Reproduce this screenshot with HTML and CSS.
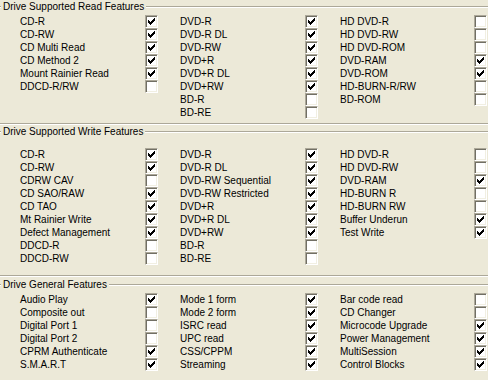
FILE: index.html
```html
<!DOCTYPE html>
<html lang="en">

<head>
    <meta charset="UTF-8">
    <meta name="viewport" content="width=device-width, initial-scale=1.0">
    <title>Drive Features</title>

    <link rel="stylesheet" href="styles.css">
</head>

<body>
    <!-- Lesefunksjoner -->
    <div class="group group-read">
        <div class="title">Drive Supported Read Features</div>
        <div class="cols">
            <div class="col">
                <div class="row"><span class="lbl">CD-R</span><span class="cb"><svg viewBox="0 0 11 11"><use href="#chk"/></svg></span></div>
                <div class="row"><span class="lbl">CD-RW</span><span class="cb"><svg viewBox="0 0 11 11"><use href="#chk"/></svg></span></div>
                <div class="row"><span class="lbl">CD Multi Read</span><span class="cb"><svg viewBox="0 0 11 11"><use href="#chk"/></svg></span></div>
                <div class="row"><span class="lbl">CD Method 2</span><span class="cb"><svg viewBox="0 0 11 11"><use href="#chk"/></svg></span></div>
                <div class="row"><span class="lbl">Mount Rainier Read</span><span class="cb"><svg viewBox="0 0 11 11"><use href="#chk"/></svg></span></div>
                <div class="row"><span class="lbl">DDCD-R/RW</span><span class="cb"></span></div>
            </div>
            <div class="col">
                <div class="row"><span class="lbl">DVD-R</span><span class="cb"><svg viewBox="0 0 11 11"><use href="#chk"/></svg></span></div>
                <div class="row"><span class="lbl">DVD-R DL</span><span class="cb"><svg viewBox="0 0 11 11"><use href="#chk"/></svg></span></div>
                <div class="row"><span class="lbl">DVD-RW</span><span class="cb"><svg viewBox="0 0 11 11"><use href="#chk"/></svg></span></div>
                <div class="row"><span class="lbl">DVD+R</span><span class="cb"><svg viewBox="0 0 11 11"><use href="#chk"/></svg></span></div>
                <div class="row"><span class="lbl">DVD+R DL</span><span class="cb"><svg viewBox="0 0 11 11"><use href="#chk"/></svg></span></div>
                <div class="row"><span class="lbl">DVD+RW</span><span class="cb"><svg viewBox="0 0 11 11"><use href="#chk"/></svg></span></div>
                <div class="row"><span class="lbl">BD-R</span><span class="cb"></span></div>
                <div class="row"><span class="lbl">BD-RE</span><span class="cb"></span></div>
            </div>
            <div class="col col-last">
                <div class="row"><span class="lbl">HD DVD-R</span><span class="cb"></span></div>
                <div class="row"><span class="lbl">HD DVD-RW</span><span class="cb"></span></div>
                <div class="row"><span class="lbl">HD DVD-ROM</span><span class="cb"></span></div>
                <div class="row"><span class="lbl">DVD-RAM</span><span class="cb"><svg viewBox="0 0 11 11"><use href="#chk"/></svg></span></div>
                <div class="row"><span class="lbl">DVD-ROM</span><span class="cb"><svg viewBox="0 0 11 11"><use href="#chk"/></svg></span></div>
                <div class="row"><span class="lbl">HD-BURN-R/RW</span><span class="cb"></span></div>
                <div class="row"><span class="lbl">BD-ROM</span><span class="cb"></span></div>
            </div>
        </div>
    </div>

    <!-- Skrivefunksjoner -->
    <div class="group group-write">
        <div class="title">Drive Supported Write Features</div>
        <div class="cols">
            <div class="col">
                <div class="row"><span class="lbl">CD-R</span><span class="cb"><svg viewBox="0 0 11 11"><use href="#chk"/></svg></span></div>
                <div class="row"><span class="lbl">CD-RW</span><span class="cb"><svg viewBox="0 0 11 11"><use href="#chk"/></svg></span></div>
                <div class="row"><span class="lbl">CDRW CAV</span><span class="cb"></span></div>
                <div class="row"><span class="lbl">CD SAO/RAW</span><span class="cb"><svg viewBox="0 0 11 11"><use href="#chk"/></svg></span></div>
                <div class="row"><span class="lbl">CD TAO</span><span class="cb"><svg viewBox="0 0 11 11"><use href="#chk"/></svg></span></div>
                <div class="row"><span class="lbl">Mt Rainier Write</span><span class="cb"><svg viewBox="0 0 11 11"><use href="#chk"/></svg></span></div>
                <div class="row"><span class="lbl">Defect Management</span><span class="cb"><svg viewBox="0 0 11 11"><use href="#chk"/></svg></span></div>
                <div class="row"><span class="lbl">DDCD-R</span><span class="cb"></span></div>
                <div class="row"><span class="lbl">DDCD-RW</span><span class="cb"></span></div>
            </div>
            <div class="col">
                <div class="row"><span class="lbl">DVD-R</span><span class="cb"><svg viewBox="0 0 11 11"><use href="#chk"/></svg></span></div>
                <div class="row"><span class="lbl">DVD-R DL</span><span class="cb"><svg viewBox="0 0 11 11"><use href="#chk"/></svg></span></div>
                <div class="row"><span class="lbl">DVD-RW Sequential</span><span class="cb"><svg viewBox="0 0 11 11"><use href="#chk"/></svg></span></div>
                <div class="row"><span class="lbl">DVD-RW Restricted</span><span class="cb"><svg viewBox="0 0 11 11"><use href="#chk"/></svg></span></div>
                <div class="row"><span class="lbl">DVD+R</span><span class="cb"><svg viewBox="0 0 11 11"><use href="#chk"/></svg></span></div>
                <div class="row"><span class="lbl">DVD+R DL</span><span class="cb"><svg viewBox="0 0 11 11"><use href="#chk"/></svg></span></div>
                <div class="row"><span class="lbl">DVD+RW</span><span class="cb"><svg viewBox="0 0 11 11"><use href="#chk"/></svg></span></div>
                <div class="row"><span class="lbl">BD-R</span><span class="cb"></span></div>
                <div class="row"><span class="lbl">BD-RE</span><span class="cb"></span></div>
            </div>
            <div class="col col-last">
                <div class="row"><span class="lbl">HD DVD-R</span><span class="cb"></span></div>
                <div class="row"><span class="lbl">HD DVD-RW</span><span class="cb"></span></div>
                <div class="row"><span class="lbl">DVD-RAM</span><span class="cb"><svg viewBox="0 0 11 11"><use href="#chk"/></svg></span></div>
                <div class="row"><span class="lbl">HD-BURN R</span><span class="cb"></span></div>
                <div class="row"><span class="lbl">HD-BURN RW</span><span class="cb"></span></div>
                <div class="row"><span class="lbl">Buffer Underun</span><span class="cb"><svg viewBox="0 0 11 11"><use href="#chk"/></svg></span></div>
                <div class="row"><span class="lbl">Test Write</span><span class="cb"><svg viewBox="0 0 11 11"><use href="#chk"/></svg></span></div>
            </div>
        </div>
    </div>

    <!-- Generelle funksjoner -->
    <div class="group group-general">
        <div class="title">Drive General Features</div>
        <div class="cols">
            <div class="col">
                <div class="row"><span class="lbl">Audio Play</span><span class="cb"><svg viewBox="0 0 11 11"><use href="#chk"/></svg></span></div>
                <div class="row"><span class="lbl">Composite out</span><span class="cb"></span></div>
                <div class="row"><span class="lbl">Digital Port 1</span><span class="cb"></span></div>
                <div class="row"><span class="lbl">Digital Port 2</span><span class="cb"></span></div>
                <div class="row"><span class="lbl">CPRM Authenticate</span><span class="cb"><svg viewBox="0 0 11 11"><use href="#chk"/></svg></span></div>
                <div class="row"><span class="lbl">S.M.A.R.T</span><span class="cb"><svg viewBox="0 0 11 11"><use href="#chk"/></svg></span></div>
            </div>
            <div class="col">
                <div class="row"><span class="lbl">Mode 1 form</span><span class="cb"><svg viewBox="0 0 11 11"><use href="#chk"/></svg></span></div>
                <div class="row"><span class="lbl">Mode 2 form</span><span class="cb"><svg viewBox="0 0 11 11"><use href="#chk"/></svg></span></div>
                <div class="row"><span class="lbl">ISRC read</span><span class="cb"><svg viewBox="0 0 11 11"><use href="#chk"/></svg></span></div>
                <div class="row"><span class="lbl">UPC read</span><span class="cb"><svg viewBox="0 0 11 11"><use href="#chk"/></svg></span></div>
                <div class="row"><span class="lbl">CSS/CPPM</span><span class="cb"><svg viewBox="0 0 11 11"><use href="#chk"/></svg></span></div>
                <div class="row"><span class="lbl">Streaming</span><span class="cb"><svg viewBox="0 0 11 11"><use href="#chk"/></svg></span></div>
            </div>
            <div class="col col-last">
                <div class="row"><span class="lbl">Bar code read</span><span class="cb"></span></div>
                <div class="row"><span class="lbl">CD Changer</span><span class="cb"></span></div>
                <div class="row"><span class="lbl">Microcode Upgrade</span><span class="cb"><svg viewBox="0 0 11 11"><use href="#chk"/></svg></span></div>
                <div class="row"><span class="lbl">Power Management</span><span class="cb"><svg viewBox="0 0 11 11"><use href="#chk"/></svg></span></div>
                <div class="row"><span class="lbl">MultiSession</span><span class="cb"><svg viewBox="0 0 11 11"><use href="#chk"/></svg></span></div>
                <div class="row"><span class="lbl">Control Blocks</span><span class="cb"><svg viewBox="0 0 11 11"><use href="#chk"/></svg></span></div>
            </div>
        </div>
    </div>

    <!-- Hakemerket, brukes av alle avkrysningsboksene -->
    <svg class="defs" width="0" height="0">
        <symbol id="chk" viewBox="0 0 11 11">
            <path d="M2 4H3V5H4V6H5V5H6V4H7V3H8V2H9V5H8V6H7V7H6V8H5V9H4V8H3V7H2Z" fill="#000" />
        </symbol>
    </svg>
</body>

</html>
```

FILE: styles.css
```css
body {
    margin: 0;
    background-color: #ece9d8;
    font-family: "Liberation Sans", Arial, sans-serif;
    font-size: 10px;
    line-height: 13px;
    color: #000;
    overflow: hidden;
}

.group {
    border-top: 1px solid #aca899;
    border-bottom: 1px solid #aca899;
    box-shadow: inset 0 1px #fff, 0 1px #fff;
}

.group-read {
    margin-top: 6px;
    padding-bottom: 4px;
}

.group-write {
    margin-top: 7px;
    padding-bottom: 10px;
}

.group-general {
    margin-top: 8px;
    padding-bottom: 20px;
}

.title {
    width: max-content;
    margin-top: -7px;
    margin-left: 1px;
    padding: 0 2px;
    height: 13px;
    background-color: #ece9d8;
}

.cols {
    display: flex;
    padding-left: 20px;
    margin-top: 2px;
}

.group-write .cols {
    margin-top: 10px;
}

.col {
    flex: none;
    width: 160px;
    display: flex;
    flex-direction: column;
}

.col-last {
    width: 147px;
}

.row {
    display: flex;
    align-items: center;
    height: 13px;
}

.lbl {
    width: 125px;
    white-space: nowrap;
}

.col-last .lbl {
    width: 134px;
}

.cb {
    box-sizing: border-box;
    width: 13px;
    height: 13px;
    flex: none;
    border: 1px solid;
    border-color: #aca899 #fff #fff #aca899;
    box-shadow: inset 1px 1px #716f64, inset -1px -1px #f1efe2;
    background-color: #fff;
}

.cb svg {
    display: block;
    width: 11px;
    height: 11px;
    shape-rendering: crispEdges;
}

.defs {
    display: block;
    width: 0;
    height: 0;
}
```
